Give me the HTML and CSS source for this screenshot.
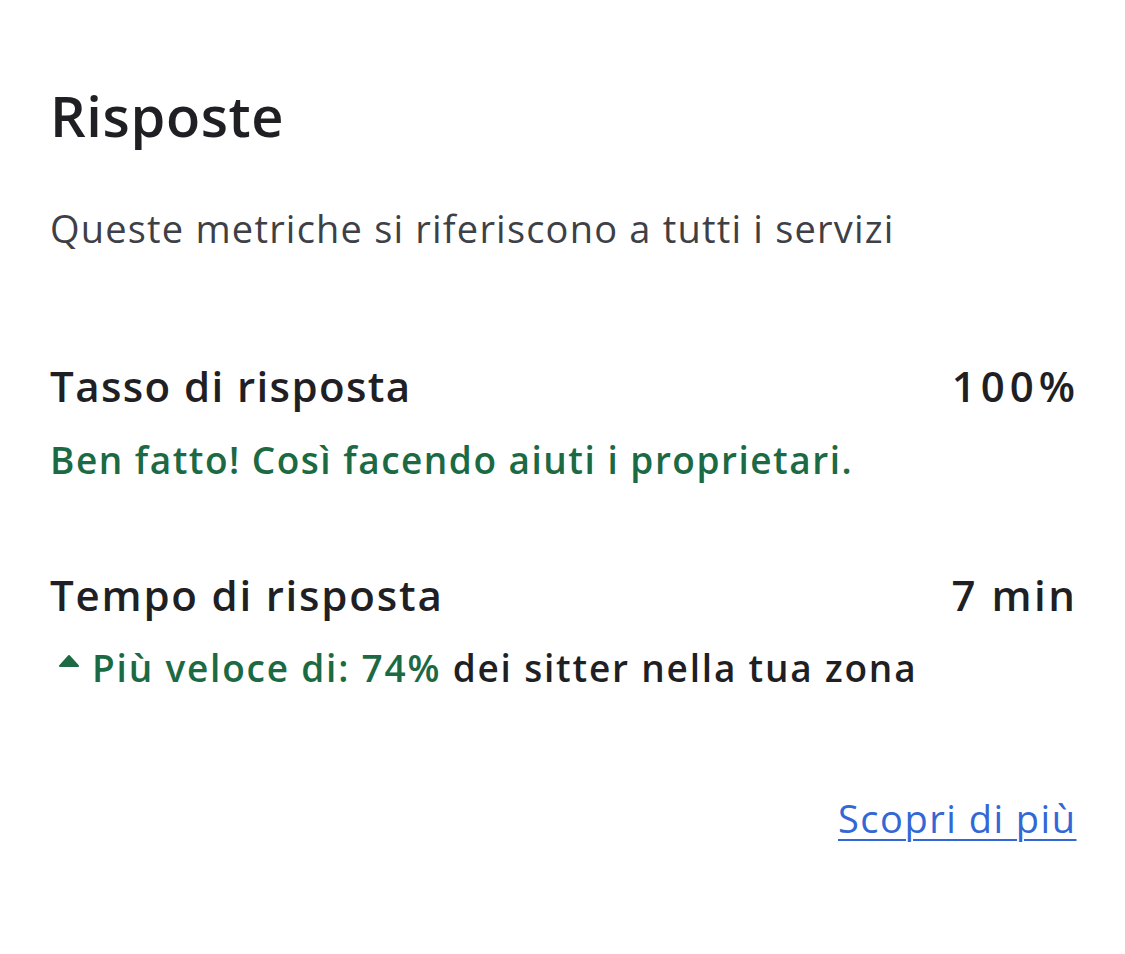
FILE: index.html
```html
<!DOCTYPE html>
<html lang="it">
<head>
<meta charset="utf-8">
<link rel="stylesheet" href="styles.css">
</head>
<body>
<main class="card">
  <h1 class="title">Risposte</h1>
  <p class="subtitle">Queste metriche si riferiscono a tutti i servizi</p>

  <section class="metric metric-rate">
    <div class="metric-row">
      <span class="metric-label">Tasso di risposta</span>
      <span class="metric-value metric-value-wide">100%</span>
    </div>
    <p class="metric-note green">Ben fatto! Così facendo aiuti i proprietari.</p>
  </section>

  <section class="metric metric-time">
    <div class="metric-row">
      <span class="metric-label label-wide">Tempo di risposta</span>
      <span class="metric-value">7 min</span>
    </div>
    <p class="metric-note">
      <svg class="up-icon" width="22" height="14" viewBox="0 0 22 14" aria-hidden="true"><path d="M11 2 L20 12 L2 12 Z" fill="#1d6b44" stroke="#1d6b44" stroke-width="2" stroke-linejoin="round"/></svg>
      <span class="green">Più veloce di: 74%</span>&nbsp;dei sitter nella tua zona
    </p>
  </section>

  <div class="more">
    <a class="more-link" href="#">Scopri di più</a>
  </div>
</main>
</body>
</html>
```

FILE: styles.css
```css
html, body {
  margin: 0;
  padding: 0;
  background: #ffffff;
}

body {
  font-family: "Open Sans", "Lato", sans-serif;
  color: #1f1f24;
}

.card {
  padding: 85px 50px 0 50px;
  display: flex;
  flex-direction: column;
}

.title {
  margin: 0;
  font-size: 56px;
  font-weight: 600;
  line-height: 60px;
  letter-spacing: 0.6px;
  color: #1f1f24;
}

.subtitle {
  margin: 58px 0 0 0;
  font-size: 38px;
  font-weight: 400;
  line-height: 50px;
  letter-spacing: 1.2px;
  color: #3e4047;
}

.metric-rate {
  margin-top: 105px;
}

.metric-time {
  margin-top: 82px;
}

.metric-row {
  display: flex;
  justify-content: space-between;
  align-items: baseline;
  font-size: 42px;
  font-weight: 600;
  line-height: 56px;
  letter-spacing: 1.4px;
  color: #1f1f24;
}

.label-wide {
  letter-spacing: 1.8px;
}

.metric-value {
  letter-spacing: 2.5px;
  margin-right: -2.5px;
}

.metric-value-wide {
  letter-spacing: 5px;
  margin-right: -5px;
}

.metric-note {
  margin: 21px 0 0 0;
  font-size: 37px;
  font-weight: 600;
  line-height: 50px;
  letter-spacing: 1.5px;
  color: #1f1f24;
  display: flex;
  align-items: center;
  white-space: nowrap;
}

.green {
  color: #1b6a44;
}

.metric-time .metric-note {
  margin-top: 20px;
  letter-spacing: 1.8px;
}

.up-icon {
  margin: 0 12px 14px 8px;
}

.more {
  display: flex;
  justify-content: flex-end;
  margin-top: 100px;
}

.more-link {
  font-size: 38px;
  line-height: 50px;
  letter-spacing: 1.5px;
  margin-right: -1.5px;
  color: #3467d6;
  text-decoration: underline;
  text-decoration-thickness: 2px;
  text-underline-offset: 6px;
}
```
